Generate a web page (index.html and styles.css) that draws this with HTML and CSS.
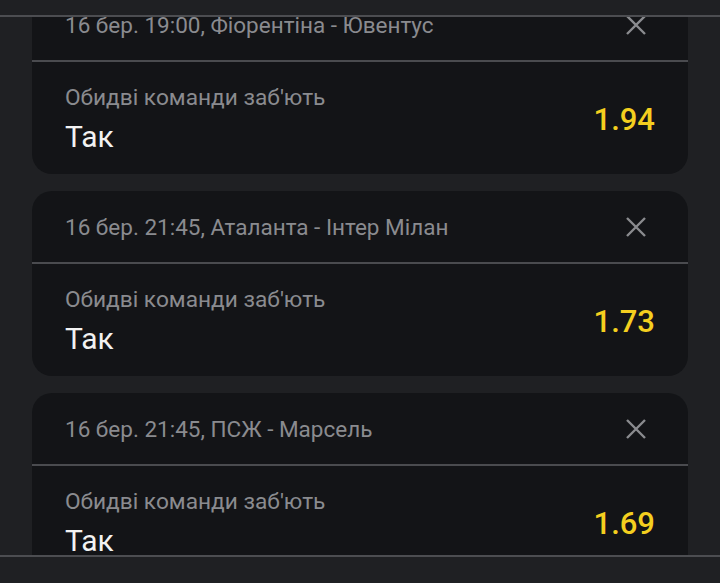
FILE: index.html
```html
<!DOCTYPE html>
<html lang="uk">
<head>
<meta charset="utf-8">
<title>Купон</title>
<link rel="stylesheet" href="styles.css">
</head>
<body>
<div class="topbar"></div>
<main class="feed">
  <div class="list">
    <section class="card">
      <div class="card-head">
        <span class="match">16 бер. 19:00, Фіорентіна - Ювентус</span>
        <svg class="close" width="22" height="22" viewBox="0 0 22 22"><path d="M2 2 L20 20 M20 2 L2 20"/></svg>
      </div>
      <div class="card-body">
        <div class="pick">
          <div class="market">Обидві команди заб'ють</div>
          <div class="outcome">Так</div>
        </div>
        <div class="odds">1.94</div>
      </div>
    </section>
    <section class="card">
      <div class="card-head">
        <span class="match">16 бер. 21:45, Аталанта - Інтер Мілан</span>
        <svg class="close" width="22" height="22" viewBox="0 0 22 22"><path d="M2 2 L20 20 M20 2 L2 20"/></svg>
      </div>
      <div class="card-body">
        <div class="pick">
          <div class="market">Обидві команди заб'ють</div>
          <div class="outcome">Так</div>
        </div>
        <div class="odds">1.73</div>
      </div>
    </section>
    <section class="card">
      <div class="card-head">
        <span class="match">16 бер. 21:45, ПСЖ - Марсель</span>
        <svg class="close" width="22" height="22" viewBox="0 0 22 22"><path d="M2 2 L20 20 M20 2 L2 20"/></svg>
      </div>
      <div class="card-body">
        <div class="pick">
          <div class="market">Обидві команди заб'ють</div>
          <div class="outcome">Так</div>
        </div>
        <div class="odds">1.69</div>
      </div>
    </section>
  </div>
</main>
<div class="bottombar"></div>
</body>
</html>
```
FILE: styles.css
```css
html, body {
  margin: 0;
  padding: 0;
}
body {
  width: 720px;
  height: 583px;
  overflow: hidden;
  background: #1f2023;
  font-family: Roboto, "Noto Sans", sans-serif;
  display: flex;
  flex-direction: column;
}
.topbar {
  height: 15px;
  flex: none;
  background: #1f2023;
  border-bottom: 2px solid #4c4d51;
  position: relative;
  z-index: 2;
}
.feed {
  flex: 1;
  overflow: hidden;
  padding: 0 32px;
}
.list {
  margin-top: -28px;
  display: flex;
  flex-direction: column;
  gap: 17px;
}
.card {
  background: #131417;
  border-radius: 20px;
  overflow: hidden;
}
.card-head {
  height: 71px;
  display: flex;
  align-items: center;
  justify-content: space-between;
  padding: 0 41px 0 33px;
  border-bottom: 2px solid #4a4b4f;
}
.match {
  font-size: 22.5px;
  color: #8a8b8f;
  white-space: nowrap;
}
.close {
  display: block;
  stroke: #8a8b8f;
  stroke-width: 2.4;
  fill: none;
}
.card-body {
  display: flex;
  align-items: center;
  justify-content: space-between;
  padding: 22px 33px 20px 33px;
}
.market {
  font-size: 22.7px;
  line-height: 28px;
  color: #8a8b8f;
}
.outcome {
  margin-top: 8px;
  font-size: 30px;
  line-height: 34px;
  color: #f2f2f2;
}
.odds {
  font-size: 31px;
  font-weight: 500;
  color: #f4cf1f;
}
.bottombar {
  height: 26px;
  flex: none;
  background: #1f2023;
  border-top: 2px solid #4c4d51;
}
```
